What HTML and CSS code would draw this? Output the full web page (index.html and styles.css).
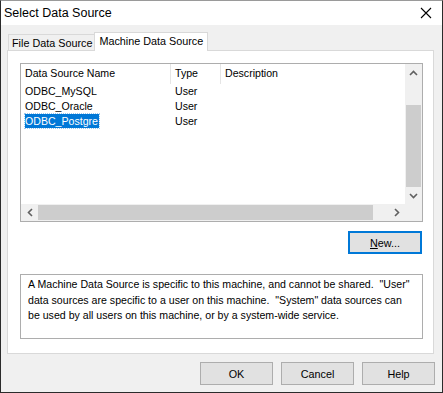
FILE: index.html
```html
<!DOCTYPE html>
<html>
<head>
<meta charset="utf-8">
<link rel="stylesheet" href="styles.css">
</head>
<body>
<div class="window">
  <div class="titlebar">
    <span class="title">Select Data Source</span>
    <svg class="close" width="12" height="12" viewBox="0 0 12 12"><path d="M1 1 L11 11 M11 1 L1 11" stroke="#000" stroke-width="1.1" fill="none"/></svg>
  </div>
  <div class="body">
    <div class="tabs">
      <div class="tab">File Data Source</div>
      <div class="tab active">Machine Data Source</div>
    </div>
    <div class="panel">
      <div class="listbox">
        <div class="list-main">
          <div class="list-content">
            <div class="row header">
              <div class="c1">Data Source Name</div>
              <div class="c2">Type</div>
              <div class="c3">Description</div>
            </div>
            <div class="row"><div class="c1"><span>ODBC_MySQL</span></div><div class="c2">User</div><div class="c3"></div></div>
            <div class="row"><div class="c1"><span>ODBC_Oracle</span></div><div class="c2">User</div><div class="c3"></div></div>
            <div class="row"><div class="c1"><span class="sel">ODBC_Postgre</span></div><div class="c2">User</div><div class="c3"></div></div>
          </div>
          <div class="vscroll">
            <div class="arrow"><svg width="9" height="6" viewBox="0 0 9 6"><path d="M1 5 L4.5 1.5 L8 5" stroke="#606060" stroke-width="1.6" fill="none"/></svg></div>
            <div class="vtrack"><div class="vthumb"></div></div>
            <div class="arrow"><svg width="9" height="6" viewBox="0 0 9 6"><path d="M1 1 L4.5 4.5 L8 1" stroke="#606060" stroke-width="1.6" fill="none"/></svg></div>
          </div>
        </div>
        <div class="hscroll">
          <div class="harrow"><svg width="6" height="9" viewBox="0 0 6 9"><path d="M5 1 L1.5 4.5 L5 8" stroke="#606060" stroke-width="1.6" fill="none"/></svg></div>
          <div class="htrack"><div class="hthumb"></div></div>
          <div class="harrow"><svg width="6" height="9" viewBox="0 0 6 9"><path d="M1 1 L4.5 4.5 L1 8" stroke="#606060" stroke-width="1.6" fill="none"/></svg></div>
          <div class="corner"></div>
        </div>
      </div>
      <div class="newrow">
        <button class="btn default"><u>N</u>ew...</button>
      </div>
      <div class="desc">A Machine Data Source is specific to this machine, and cannot be shared.&nbsp; "User"<br>data sources are specific to a user on this machine.&nbsp; "System" data sources can<br>be used by all users on this machine, or by a system-wide service.</div>
    </div>
    <div class="buttons">
      <button class="btn">OK</button>
      <button class="btn">Cancel</button>
      <button class="btn">Help</button>
    </div>
  </div>
</div>
</body>
</html>
```
FILE: styles.css
```css
html, body {
  margin: 0;
  padding: 0;
}
body {
  width: 443px;
  height: 393px;
  overflow: hidden;
  font-family: "Liberation Sans", Arial, sans-serif;
  font-size: 10.6px;
  color: #000;
}
.window {
  width: 443px;
  height: 393px;
  box-sizing: border-box;
  border: 1px solid #2b2b2b;
  border-top-color: #9a9a9a;
  background: #f0f0f0;
  display: flex;
  flex-direction: column;
}
.titlebar {
  height: 24px;
  background: #fff;
  display: flex;
  align-items: center;
  justify-content: space-between;
  padding: 0 10px 0 3px;
}
.title {
  font-size: 12.5px;
}
.close {
  display: block;
}
.body {
  flex: 1;
  display: flex;
  flex-direction: column;
  padding: 6px 7px 0 6px;
}
.tabs {
  display: flex;
  align-items: flex-end;
  height: 19px;
  padding-left: 1px;
}
.tab {
  height: 15px;
  line-height: 16px;
  padding: 0 2px 0 3px;
  border: 1px solid #d9d9d9;
  border-bottom: none;
  border-right: none;
  font-size: 10.8px;
  color: #000;
  background: #f0f0f0;
}
.tab.active {
  height: 18px;
  line-height: 17px;
  padding: 0 4px 0 4px;
  background: #fff;
  border-right: 1px solid #d9d9d9;
  position: relative;
  z-index: 1;
  margin-bottom: -1px;
}
.panel {
  height: 304px;
  box-sizing: border-box;
  width: 427px;
  background: #fff;
  border: 1px solid #d9d9d9;
  padding: 12px 10px 0 12px;
  display: flex;
  flex-direction: column;
}
.listbox {
  width: 403px;
  height: 159px;
  box-sizing: border-box;
  border: 1px solid #adadad;
  display: flex;
  flex-direction: column;
}
.list-main {
  flex: 1;
  display: flex;
  min-height: 0;
}
.list-content {
  flex: 1;
  background: #fff;
}
.row {
  display: flex;
  height: 15px;
  line-height: 15px;
}
.row.header {
  height: 20px;
  line-height: 18px;
}
.row.header .c1, .row.header .c2 {
  border-right: 1px solid #e5e5e5;
}
.c1, .c2, .c3 {
  box-sizing: border-box;
}
.c1 {
  width: 150px;
  padding-left: 4px;
}
.c2 {
  width: 50px;
  padding-left: 4px;
}
.c3 {
  flex: 1;
  padding-left: 4px;
}
.sel {
  display: inline-block;
  background: #0078d7;
  color: #fff;
  outline: 1px dotted #99c9ef;
  line-height: 14px;
  padding-right: 1px;
}
.vscroll {
  width: 17px;
  background: #f0f0f0;
  display: flex;
  flex-direction: column;
}
.arrow {
  height: 17px;
  display: flex;
  align-items: center;
  justify-content: center;
}
.vtrack {
  flex: 1;
  display: flex;
  flex-direction: column;
  justify-content: flex-end;
}
.vthumb {
  height: 82px;
  margin: 0 1px;
  background: #cdcdcd;
}
.hscroll {
  height: 17px;
  display: flex;
  background: #f0f0f0;
}
.harrow {
  width: 17px;
  display: flex;
  align-items: center;
  justify-content: center;
}
.htrack {
  flex: 1;
  display: flex;
  align-items: center;
  padding-right: 15px;
}
.hthumb {
  flex: 1;
  height: 15px;
  background: #cdcdcd;
}
.corner {
  width: 17px;
}
.newrow {
  display: flex;
  justify-content: flex-end;
  padding-top: 9px;
  width: 402px;
}
.btn {
  width: 73px;
  height: 23px;
  box-sizing: border-box;
  background: #e1e1e1;
  border: 1px solid #adadad;
  font-family: "Liberation Sans", Arial, sans-serif;
  font-size: 10.8px;
  color: #000;
  padding: 0;
  margin: 0;
}
.btn.default {
  width: 74px;
  height: 23px;
  border: 2px solid #0078d7;
}
.desc {
  margin-top: 20px;
  width: 403px;
  height: 65px;
  box-sizing: border-box;
  border: 1px solid #adadad;
  padding: 2px 6px 0 7px;
  line-height: 15.5px;
  font-size: 10.6px;
  white-space: nowrap;
}
.buttons {
  display: flex;
  justify-content: flex-end;
  gap: 8px;
  padding-top: 8px;
}
```
